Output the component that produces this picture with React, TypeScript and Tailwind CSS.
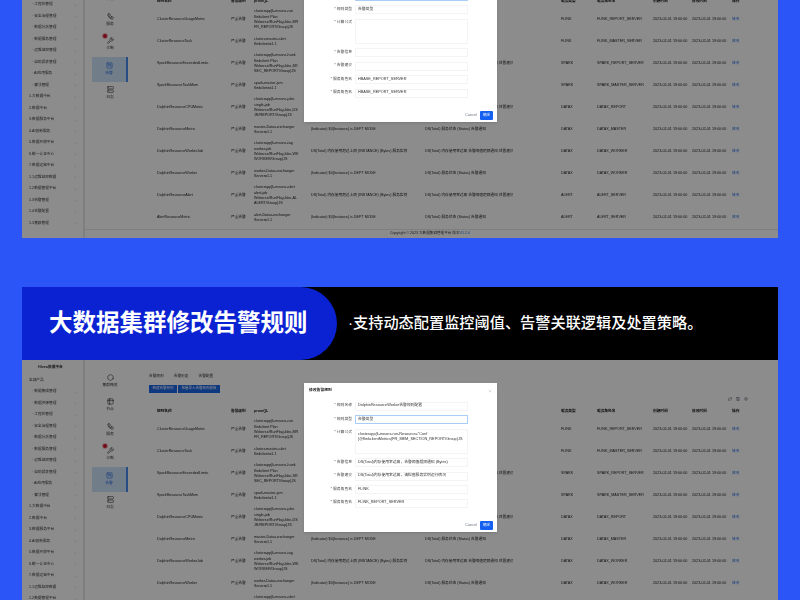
import { ChevronRight, Hexagon, Table2, Workflow, Wrench, SquareKanban, Server, X, Settings, RefreshCw, Columns3 } from "lucide-react";

const groups = [
  "数据集成管理", "数据资源管理", "工程化管理", "安全治理管理", "数据分析管理",
  "数据服务管理", "运维监控管理", "自助报表管理", "AI应用服务", "算法管理",
];
const numbered = [
  "1.大数据中台", "2.数据中台", "3.数据服务平台", "4.AI创新服务", "5.数据开放平台", "6.统一认证中心",
  "7.数据运营中台", "1.1运维监控数据", "1.2数据管理平台", "1.3告警管理", "1.4告警配置", "1.5集群管理",
];

const navItems = [
  { icon: Hexagon, label: "集群概览" },
  { icon: Table2, label: "节点" },
  { icon: Workflow, label: "服务" },
  { icon: Wrench, label: "诊断", badge: true },
  { icon: SquareKanban, label: "告警", active: true },
  { icon: Server, label: "日志" },
];

const shortSql = "(Indicator) $0{Instance} is DEPT MODE";
const longSql = "DS(Total) 内存使用超过上限 (INSTANCE) (Bytes)  服务实例";
const shortDetail = "DS(Total) 服务状态 (Status) 告警通知";
const longDetail = "DS(Total) 内存使用率过高 告警阈值超限通知 处置建议";
const rows = [
  { name: "ClusterResourceUsageMetric", desc: ["clusterapp{k-means-run", "flinkclient Plan", "Weberse/RunFlagJobs,MR", "FR_REPORT/Group}JS"], sql: "", detail: "", engine: "FLINK", source: "FLINK_REPORT_SERVER" },
  { name: "ClusterResourceTask", desc: ["cluster-master-alert", "flinkclient=1.1"], sql: "", detail: "", engine: "FLINK", source: "FLINK_MASTER_SERVER" },
  { name: "SparkResourceExceededLimits", desc: ["clusterapp{k-means-hunk", "flinkclient Plan", "Weberse/RunFlagJobs,SR", "SEC_REPORT/Group}JS"], sql: "", detail: longDetail, engine: "SPARK", source: "SPARK_REPORT_SERVER" },
  { name: "SparkResourceTaskMem", desc: ["spark-master-jvm", "flinkclient=1.1"], sql: "", detail: shortDetail, engine: "SPARK", source: "SPARK_MASTER_SERVER" },
  { name: "DolphinResourceCPUMetric", desc: ["clusterapp{k-means-jobs", "single-job", "Weberse/RunFlagJobs,DS", "JR/REPORT/Group}JS"], sql: "", detail: longDetail, engine: "DATAX", source: "DATAX_REPORT" },
  { name: "DolphinResourceMetric", desc: ["master-Datax-exchanger", "Server=1.1"], sql: shortSql, detail: shortDetail, engine: "DATAX", source: "DATAX_MASTER" },
  { name: "DolphinResourceWorkerJob", desc: ["clusterapp{k-means-tag", "worker-job", "Weberse/RunFlagJobs,WK", "WORKER/Group}JS"], sql: longSql, detail: longDetail, engine: "DATAX", source: "DATAX_WORKER" },
  { name: "DolphinResourceWorker", desc: ["worker-Datax-exchanger", "Server=1.1"], sql: shortSql, detail: shortDetail, engine: "DATAX", source: "DATAX_WORKER" },
  { name: "DolphinResourceAlert", desc: ["clusterapp{k-means-alert", "alert-job", "Weberse/RunFlagJobs,AL", "ALERT/Group}JS"], sql: longSql, detail: longDetail, engine: "ALERT", source: "ALERT_SERVER" },
  { name: "AlertResourceMetric", desc: ["alert-Datax-exchanger", "Server=1.1"], sql: shortSql, detail: shortDetail, engine: "ALERT", source: "ALERT_SERVER" },
];

type ModalProps = {
  focus: number;
  values: string[];
  code: string[];
};

const labels = ["* 规则名称", "* 规则类型", "* 计算公式", "* 告警信息", "* 告警建议", "* 服务角色名", "* 服务角色名"];

function Field({ label, value, focused }: { label: string; value: string; focused: boolean }) {
  return (
    <div className="flex h-[9px] items-center">
      <span className="w-[48px] text-right text-[#444]">{label}</span>
      <div className={`ml-[3px] flex h-full w-[113px] items-center border px-[2px] text-[#333] ${focused ? "border-[#a9cdf5]" : "border-gray-100"}`}>
        {value}
      </div>
    </div>
  );
}

function Modal({ focus, values, code }: ModalProps) {
  return (
    <div className="absolute left-[282px] top-[23px] z-20 flex h-[149px] w-[193px] flex-col bg-white text-[3.8px] shadow">
      <div className="flex h-[14px] items-center justify-between px-[5px] pt-[1px] font-bold text-[#222]">
        <span>修改告警规则</span>
        <X className="h-[4px] w-[4px] text-gray-400" />
      </div>
      <div className="mt-[4.5px] flex flex-col gap-[4.5px]">
        <Field label={labels[0]} value={values[0]} focused={focus === 0} />
        <Field label={labels[1]} value={values[1]} focused={focus === 1} />
        <div className="flex h-[25px]">
          <span className="w-[48px] pt-[1px] text-right text-[#444]">{labels[2]}</span>
          <div className="ml-[3px] w-[113px] border border-gray-100 px-[2px] py-[2px] leading-[5px] text-[#333]">
            {code.map((line) => (
              <div key={line} className="whitespace-nowrap">{line}</div>
            ))}
          </div>
        </div>
        <Field label={labels[3]} value={values[2]} focused={false} />
        <Field label={labels[4]} value={values[3]} focused={false} />
        <Field label={labels[5]} value={values[4]} focused={false} />
        <Field label={labels[6]} value={values[5]} focused={false} />
      </div>
      <div className="mt-auto mb-[2px] flex items-center justify-end gap-[3px] pr-[4px]">
        <span className="text-gray-500">Cancel</span>
        <button className="h-[9px] w-[13px] rounded-[1px] bg-[#1560f0] text-[3.5px] text-white">确定</button>
      </div>
    </div>
  );
}

function Sidebar() {
  return (
    <aside className="w-[63px] shrink-0 overflow-hidden border-r-2 border-gray-200 text-[3.7px] text-[#333]">
      <div className="flex h-[15px] items-center pl-[16px] font-semibold">Hiveo数据中台</div>
      <div className="flex h-[11.5px] items-center pl-[7px]">全部产品</div>
      {groups.map((g) => (
        <div key={g} className="flex h-[11.5px] items-center justify-between pl-[10px] pr-[6px]">
          <span>· {g}</span>
          <ChevronRight className="h-[3px] w-[3px] text-gray-500" />
        </div>
      ))}
      {numbered.map((g) => (
        <div key={g} className="flex h-[11.5px] items-center justify-between pl-[7px] pr-[6px]">
          <span>{g}</span>
          <ChevronRight className="h-[3px] w-[3px] text-gray-500" />
        </div>
      ))}
    </aside>
  );
}

function Rail() {
  return (
    <nav className="w-[60px] shrink-0 pl-[7px] pt-[9px] text-[3.8px] text-[#333]">
      {navItems.map(({ icon: Icon, label, active, badge }) => (
        <div
          key={label}
          className={`relative flex h-[24.5px] w-[36px] flex-col items-center justify-center gap-[2px] ${active ? "border-r-2 border-[#4a8cf0] bg-[#cfe3fb] text-[#2a6fe0]" : ""}`}
        >
          {badge && <span className="absolute left-[11px] top-[1px] h-[4px] w-[4px] rounded-full bg-[#d3122e] ring-1 ring-[#f3b8c2]" />}
          <Icon className="h-[7px] w-[7px]" />
          <span>{label}</span>
        </div>
      ))}
    </nav>
  );
}

function Table() {
  return (
    <main className="min-w-0 flex-1 pl-[4px] text-[3.7px] text-[#222]">
      <div className="mt-[14px] flex h-[6px] items-center gap-[10px] text-[#333]">
        <span>告警规则</span>
        <span>告警历史</span>
        <span>告警配置</span>
      </div>
      <div className="mt-[5px] flex h-[8px] gap-[1px] text-[3.5px] text-white">
        <button className="w-[28px] bg-[#1a66e8]">新建告警规则</button>
        <button className="w-[42px] bg-[#1a66e8]">批量导入告警规则模板</button>
      </div>
      <div className="flex h-[11px] items-center justify-end gap-[4px] pr-[30px] text-gray-600">
        <RefreshCw className="h-[4px] w-[4px]" />
        <Columns3 className="h-[4px] w-[4px]" />
        <Settings className="h-[4px] w-[4px]" />
      </div>
      <div className="flex h-[15px] items-center pl-[8px] font-bold whitespace-nowrap">
        <span className="w-[74px]">规则名称</span>
        <span className="w-[23px]">告警级别</span>
        <span className="w-[57px]">promQL</span>
        <span className="w-[114px]">告警信息</span>
        <span className="w-[136px]">告警建议</span>
        <span className="w-[36px]">服务类型</span>
        <span className="w-[56px]">服务角色名</span>
        <span className="w-[39px]">创建时间</span>
        <span className="w-[40px]">修改时间</span>
        <span>操作</span>
      </div>
      {rows.map((r) => (
        <div key={r.name} className="flex h-[22px] items-center pl-[8px] whitespace-nowrap">
          <span className="w-[74px]">{r.name}</span>
          <span className="w-[23px]">严重告警</span>
          <div className="w-[57px] leading-[5.3px]">
            {r.desc.map((line) => (
              <div key={line}>{line}</div>
            ))}
          </div>
          <span className="w-[114px]">{r.sql}</span>
          <span className="w-[136px]">{r.detail}</span>
          <span className="w-[36px]">{r.engine}</span>
          <span className="w-[56px]">{r.source}</span>
          <span className="w-[39px]">2023-02-01 19:00:00</span>
          <span className="w-[40px]">2023-02-01 19:00:00</span>
          <span className="text-[#2a6fe0]">修改</span>
        </div>
      ))}
    </main>
  );
}

function Screen({ modal }: { modal: ModalProps }) {
  return (
    <div className="relative flex h-[288px] w-full shrink-0 bg-white blur-[0.5px]">
      <Sidebar />
      <div className="flex min-w-0 flex-1 flex-col">
        <div className="flex h-[279px]">
          <Rail />
          <Table />
        </div>
        <div className="flex h-[9px] items-center border-t border-gray-200 pl-[305px] text-[3.6px] text-[#333]">
          <span>Copyright © 2023 大数据集群管理平台 版本 </span>
          <span className="text-[#2a6fe0]">V1.2.0</span>
        </div>
      </div>
      <div className="absolute inset-0 z-10 bg-black/45" />
      <Modal {...modal} />
    </div>
  );
}

export default function App() {
  return (
    <div className="flex h-[600px] w-[800px] flex-col overflow-hidden bg-[#2b55f7] px-[22px] [font-family:'Liberation_Sans','Noto_Sans_CJK_SC',sans-serif]">
      <section className="flex h-[238px] shrink-0 flex-col justify-end overflow-hidden">
        <Screen
          modal={{
            focus: 0,
            values: ["", "告警类型", "", "", "HBASE_REPORT_SERVER", "HBASE_REPORT_SERVER"],
            code: [],
          }}
        />
      </section>
      <header className="mt-[49px] flex h-[73px] shrink-0 items-center bg-black">
        <div className="flex h-full w-[315px] shrink-0 items-center rounded-r-[37px] bg-[#0a22d2] pl-[27px] text-[23.5px] font-bold whitespace-nowrap text-white">
          大数据集群修改告警规则
        </div>
        <p className="ml-[11px] text-[15.2px] font-medium whitespace-nowrap text-white">
          ·支持动态配置监控阈值、告警关联逻辑及处置策略。
        </p>
      </header>
      <section className="h-[240px] shrink-0 overflow-hidden">
        <Screen
          modal={{
            focus: 1,
            values: ["DolphinResourceWorker告警规则配置", "告警类型", "DS(Total)内存使用率过高，告警阈值超限通知 (Bytes)", "DS(Total)内存使用率过高，请检查服务实例运行情况", "FLINK", "FLINK_REPORT_SERVER"],
            code: ["clusterapp{k-means-run-Resource=\"Conf", "}@flinkclientMetrics{FR_MEM_SECTION_REPORT/Group}JS"],
          }}
        />
      </section>
    </div>
  );
}
